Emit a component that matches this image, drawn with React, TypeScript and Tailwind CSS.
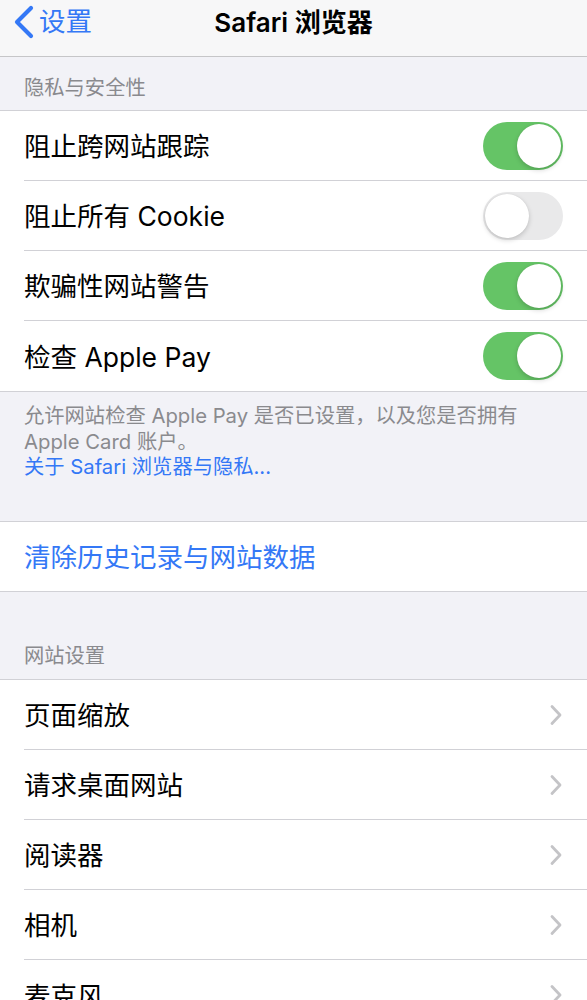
import React from 'react';

const FONT = { fontFamily: '"Inter", "Noto Sans CJK SC", sans-serif' };

const Toggle: React.FC<{ on: boolean }> = ({ on }) => (
  <div
    className={`w-[80px] h-[48px] rounded-full p-[2px] flex ${
      on ? 'bg-[#65c466] justify-end' : 'bg-[#e9e9ea] justify-start'
    }`}
  >
    <div className="w-[44px] h-[44px] rounded-full bg-white shadow-[0_2px_5px_rgba(0,0,0,0.18),0_0_1px_rgba(0,0,0,0.1)]" />
  </div>
);

const Chevron: React.FC = () => (
  <svg width="14" height="22" viewBox="0 0 14 22" fill="none">
    <path d="M3 2.5 L11 11 L3 19.5" stroke="#c4c4c7" strokeWidth="2.8" strokeLinecap="round" strokeLinejoin="round" />
  </svg>
);

const Row: React.FC<{ children: React.ReactNode; last?: boolean; right?: React.ReactNode }> = ({ children, last, right }) => (
  <div className="pl-6 bg-white">
    <div className={`h-[70px] flex items-center justify-between pr-6 ${last ? '' : 'border-b border-[#d1d1d6]'}`}>
      <span className="text-[26.5px] text-black pt-[3px]">{children}</span>
      {right}
    </div>
  </div>
);

const privacy = [
  { label: '阻止跨网站跟踪', on: true },
  { label: '阻止所有 Cookie', on: false },
  { label: '欺骗性网站警告', on: true },
  { label: '检查 Apple Pay', on: true },
];

const sites = ['页面缩放', '请求桌面网站', '阅读器', '相机', '麦克风'];

export default function App() {
  return (
    <div className="w-[587px] h-[1000px] overflow-hidden bg-[#f2f2f7]" style={FONT}>
      <div className="h-[57px] bg-[#f7f7f8] border-b border-[#c6c6c8] relative">
        <div className="h-[44px] flex items-center pl-[12px] text-[#3478f6]">
          <svg width="24" height="34" viewBox="0 0 24 34" fill="none">
            <path d="M19 3 L5 17 L19 31" stroke="#3478f6" strokeWidth="4.2" strokeLinecap="round" strokeLinejoin="round" />
          </svg>
          <span className="text-[26.5px] ml-[3px]">设置</span>
        </div>
        <div className="absolute left-0 right-0 top-0 h-[44px] flex items-center justify-center text-[26px] font-semibold text-black pointer-events-none">
          Safari 浏览器
        </div>
      </div>

      <div className="h-[53px] flex items-end pl-6 pb-[10px] text-[20.3px] leading-[24px] text-[#8a8a8e]">隐私与安全性</div>
      <div className="border-y border-[#d1d1d6]">
        {privacy.map((p, i) => (
          <Row key={p.label} last={i === privacy.length - 1} right={<Toggle on={p.on} />}>
            {p.label}
          </Row>
        ))}
      </div>

      <div className="h-[129px] px-6 pt-[11px] text-[20.3px] leading-[25.5px] text-[#8a8a8e]">
        <p>允许网站检查 Apple Pay 是否已设置，以及您是否拥有</p>
        <p>Apple Card 账户。</p>
        <p className="text-[#3478f6]">关于 Safari 浏览器与隐私...</p>
      </div>

      <div className="border-y border-[#d1d1d6] bg-white pl-6 h-[71px] flex items-center">
        <span className="text-[26.5px] text-[#3478f6] pt-[3px]">清除历史记录与网站数据</span>
      </div>

      <div className="h-[87px] flex items-end pl-6 pb-[11px] text-[20.3px] leading-[24px] text-[#8a8a8e]">网站设置</div>
      <div className="border-t border-[#d1d1d6]">
        {sites.map((s, i) => (
          <Row key={s} last={i === sites.length - 1} right={<Chevron />}>
            {s}
          </Row>
        ))}
      </div>
    </div>
  );
}
